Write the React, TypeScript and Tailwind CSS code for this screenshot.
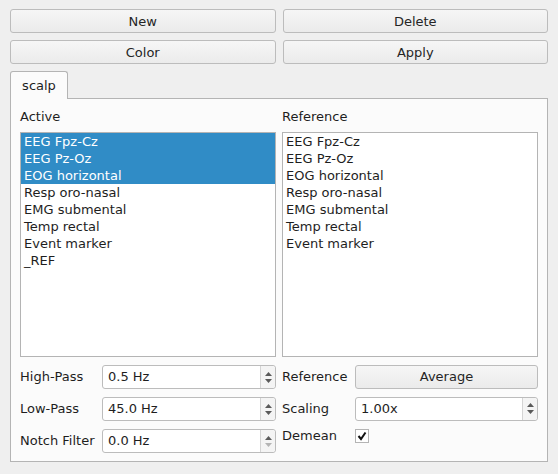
import React from "react";

const font = { fontFamily: '"DejaVu Sans", "Noto Sans", sans-serif' };

const active = [
  "EEG Fpz-Cz",
  "EEG Pz-Oz",
  "EOG horizontal",
  "Resp oro-nasal",
  "EMG submental",
  "Temp rectal",
  "Event marker",
  "_REF",
];
const reference = [
  "EEG Fpz-Cz",
  "EEG Pz-Oz",
  "EOG horizontal",
  "Resp oro-nasal",
  "EMG submental",
  "Temp rectal",
  "Event marker",
];

function Button({ label }: { label: string }) {
  return (
    <button className="h-[24px] w-full rounded-[3px] border border-[#bcbcbc] bg-gradient-to-b from-[#f6f6f6] to-[#ebebeb] text-[13px] text-[#252525] leading-none">
      {label}
    </button>
  );
}

function ListBox({ items, selected }: { items: string[]; selected: number }) {
  return (
    <div className="h-[225px] border border-[#b4b4b4] bg-white">
      {items.map((t, i) => (
        <div
          key={t}
          className={
            "h-[17px] px-[3px] text-[13px] leading-[17px] " +
            (i < selected ? "bg-[#308cc6] text-white" : "text-[#1e1e1e]")
          }
        >
          {t}
        </div>
      ))}
    </div>
  );
}

function SpinBox({ value, upOnly }: { value: string; upOnly?: boolean }) {
  return (
    <div className="flex h-[24px] flex-1 rounded-[3px] border border-[#bcbcbc] bg-white">
      <div className="flex-1 px-[5px] text-[13px] leading-[22px] text-[#1e1e1e]">{value}</div>
      <div className="flex w-[15px] flex-col items-center justify-center gap-[3px] rounded-r-[3px] border-l border-[#d4d4d4] bg-[#f4f4f4]">
        <svg width="7" height="4" viewBox="0 0 7 4">
          <path d="M0 4 L3.5 0 L7 4 Z" fill="#5a5a5a" />
        </svg>
        <svg width="7" height="4" viewBox="0 0 7 4">
          <path d="M0 0 L3.5 4 L7 0 Z" fill={upOnly ? "#b4b4b4" : "#5a5a5a"} />
        </svg>
      </div>
    </div>
  );
}

export default function App() {
  return (
    <div style={font} className="h-[474px] w-[558px] bg-[#efefef] px-[10px] pt-[9px] text-[#1e1e1e]">
      <div className="grid grid-cols-2 gap-x-[7px] gap-y-[7px]">
        <Button label="New" />
        <Button label="Delete" />
        <Button label="Color" />
        <Button label="Apply" />
      </div>

      <div className="mt-[7px]">
        <div className="flex">
          <div className="relative z-10 -mb-px flex h-[28px] w-[58px] items-center justify-center rounded-t-[3px] border border-b-0 border-[#b4b4b4] bg-[#fbfbfb] text-[13px]">
            scalp
          </div>
        </div>
        <div className="h-[364px] border border-[#b4b4b4] bg-[#fbfbfb] px-[9px] pt-[9px]">
          <div className="grid grid-cols-2 gap-x-[6px]">
            <div>
              <div className="h-[24px] text-[13px] leading-[18px]">Active</div>
              <ListBox items={active} selected={3} />
              <div className="mt-[8px] flex flex-col gap-[8px]">
                <div className="flex items-center">
                  <span className="w-[82px] text-[13px]">High-Pass</span>
                  <SpinBox value="0.5 Hz" />
                </div>
                <div className="flex items-center">
                  <span className="w-[82px] text-[13px]">Low-Pass</span>
                  <SpinBox value="45.0 Hz" />
                </div>
                <div className="flex items-center">
                  <span className="w-[82px] text-[13px]">Notch Filter</span>
                  <SpinBox value="0.0 Hz" upOnly />
                </div>
              </div>
            </div>
            <div>
              <div className="h-[24px] text-[13px] leading-[18px]">Reference</div>
              <ListBox items={reference} selected={0} />
              <div className="mt-[7px] flex flex-col gap-[8px]">
                <div className="flex items-center">
                  <span className="w-[73px] text-[13px]">Reference</span>
                  <div className="flex-1">
                    <Button label="Average" />
                  </div>
                </div>
                <div className="flex items-center">
                  <span className="w-[73px] text-[13px]">Scaling</span>
                  <SpinBox value="1.00x" />
                </div>
                <div className="-mt-[1px] flex h-[17px] items-center">
                  <span className="w-[73px] text-[13px]">Demean</span>
                  <div className="flex h-[14px] w-[14px] items-center justify-center border border-[#b4b4b4] bg-white">
                    <svg width="10" height="10" viewBox="0 0 10 10">
                      <path d="M1.5 5 L4 8 L8.5 1.5" fill="none" stroke="#111" strokeWidth="2" />
                    </svg>
                  </div>
                </div>
              </div>
            </div>
          </div>
        </div>
      </div>
    </div>
  );
}
